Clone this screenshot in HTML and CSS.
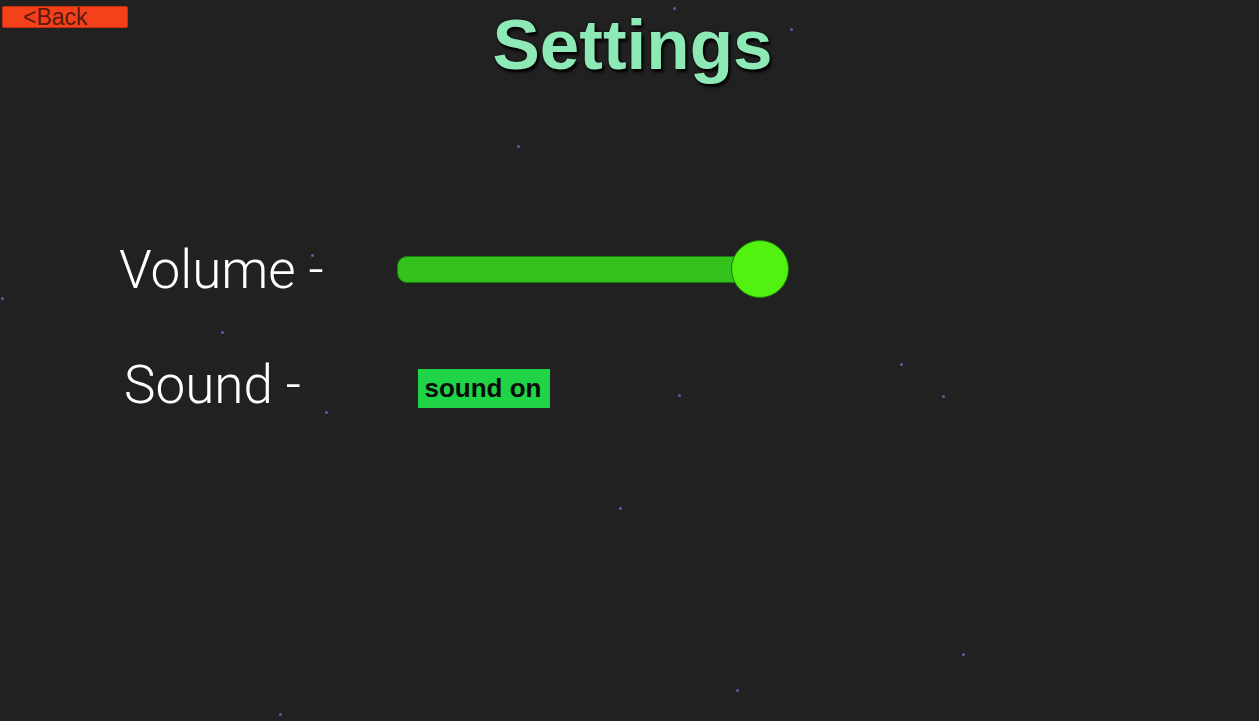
FILE: index.html
```html
<!DOCTYPE html>
<html lang="en">
<head>
  <meta charset="UTF-8">
  <title>Settings</title>
  <link rel="stylesheet" href="styles.css">
</head>
<body>
  <!-- background stars -->
  <div class="stars">
    <span class="star" style="left:673px;top:7px"></span>
    <span class="star" style="left:790px;top:28px"></span>
    <span class="star" style="left:517px;top:145px"></span>
    <span class="star" style="left:1px;top:297px"></span>
    <span class="star" style="left:221px;top:331px"></span>
    <span class="star" style="left:311px;top:254px"></span>
    <span class="star" style="left:325px;top:411px"></span>
    <span class="star" style="left:678px;top:394px"></span>
    <span class="star" style="left:900px;top:363px"></span>
    <span class="star" style="left:942px;top:395px"></span>
    <span class="star" style="left:619px;top:507px"></span>
    <span class="star" style="left:962px;top:653px"></span>
    <span class="star" style="left:736px;top:689px"></span>
    <span class="star" style="left:279px;top:713px"></span>
  </div>

  <div class="page">
    <header class="top">
      <button class="back" type="button">&lt;Back</button>
      <h1>Settings</h1>
    </header>

    <div class="settings">
      <div class="row">
        <span class="label">Volume -</span>
        <div class="slider">
          <div class="track"></div>
          <div class="thumb"></div>
        </div>
      </div>
      <div class="row sound">
        <span class="label">Sound -</span>
        <button class="toggle" type="button">sound on</button>
      </div>
    </div>
  </div>
</body>
</html>
```

FILE: styles.css
```css
/* base */
html, body {
  margin: 0;
  padding: 0;
  height: 100%;
}
body {
  background-color: #212121;
  font-family: 'Liberation Sans', Arial, sans-serif;
  overflow: hidden;
  position: relative;
}

/* stars */
.stars {
  position: absolute;
  inset: 0;
  pointer-events: none;
}
.star {
  position: absolute;
  width: 3px;
  height: 3px;
  border-radius: 50%;
  background-color: #5d5fa8;
}

.page {
  position: relative;
}

/* header */
.top {
  position: relative;
  height: 150px;
}
.back {
  position: absolute;
  left: 2px;
  top: 6px;
  width: 126px;
  height: 22px;
  padding: 0 0 0 20px;
  border: 1px solid #c2300f;
  border-radius: 2px;
  background-color: #f5401c;
  color: #5a1a10;
  font-family: 'Liberation Sans', Arial, sans-serif;
  font-size: 23px;
  line-height: 20px;
  text-align: left;
  cursor: pointer;
}
h1 {
  margin: 0;
  padding: 7px 0 0 6px;
  text-align: center;
  font-size: 71px;
  font-weight: bold;
  line-height: 76px;
  color: #8deab7;
  text-shadow: 2px 3px 3px #000, 0 0 2px #000;
}

/* settings rows */
.settings {
  display: flex;
  flex-direction: column;
  gap: 43px;
  padding-left: 119px;
  margin-top: 84px;
}
.row {
  display: flex;
  align-items: center;
  height: 72px;
}
.label {
  font-family: Roboto, 'Noto Sans', sans-serif;
  font-weight: 300;
  font-size: 53px;
  color: #fff;
  width: 277px;
}
.sound .label {
  padding-left: 5px;
  width: 294px;
}

/* slider */
.slider {
  position: relative;
  width: 393px;
  height: 60px;
  display: flex;
  align-items: center;
}
.track {
  width: 362px;
  height: 25px;
  margin-left: 1px;
  margin-top: -1px;
  border: 1px solid #1c7a0c;
  border-radius: 10px;
  background-color: #33c21b;
}
.thumb {
  position: absolute;
  right: 0;
  top: 0;
  width: 56px;
  height: 56px;
  border: 1px solid #1d7a0c;
  border-radius: 50%;
  background-color: #53f110;
}

/* sound toggle */
.toggle {
  width: 132px;
  height: 39px;
  margin-top: 6px;
  border: none;
  padding: 0 6px 0 4px;
  background-color: #1fd446;
  color: #0a0a0a;
  font-family: 'Liberation Sans', Arial, sans-serif;
  font-weight: bold;
  font-size: 26px;
  cursor: pointer;
}
```
